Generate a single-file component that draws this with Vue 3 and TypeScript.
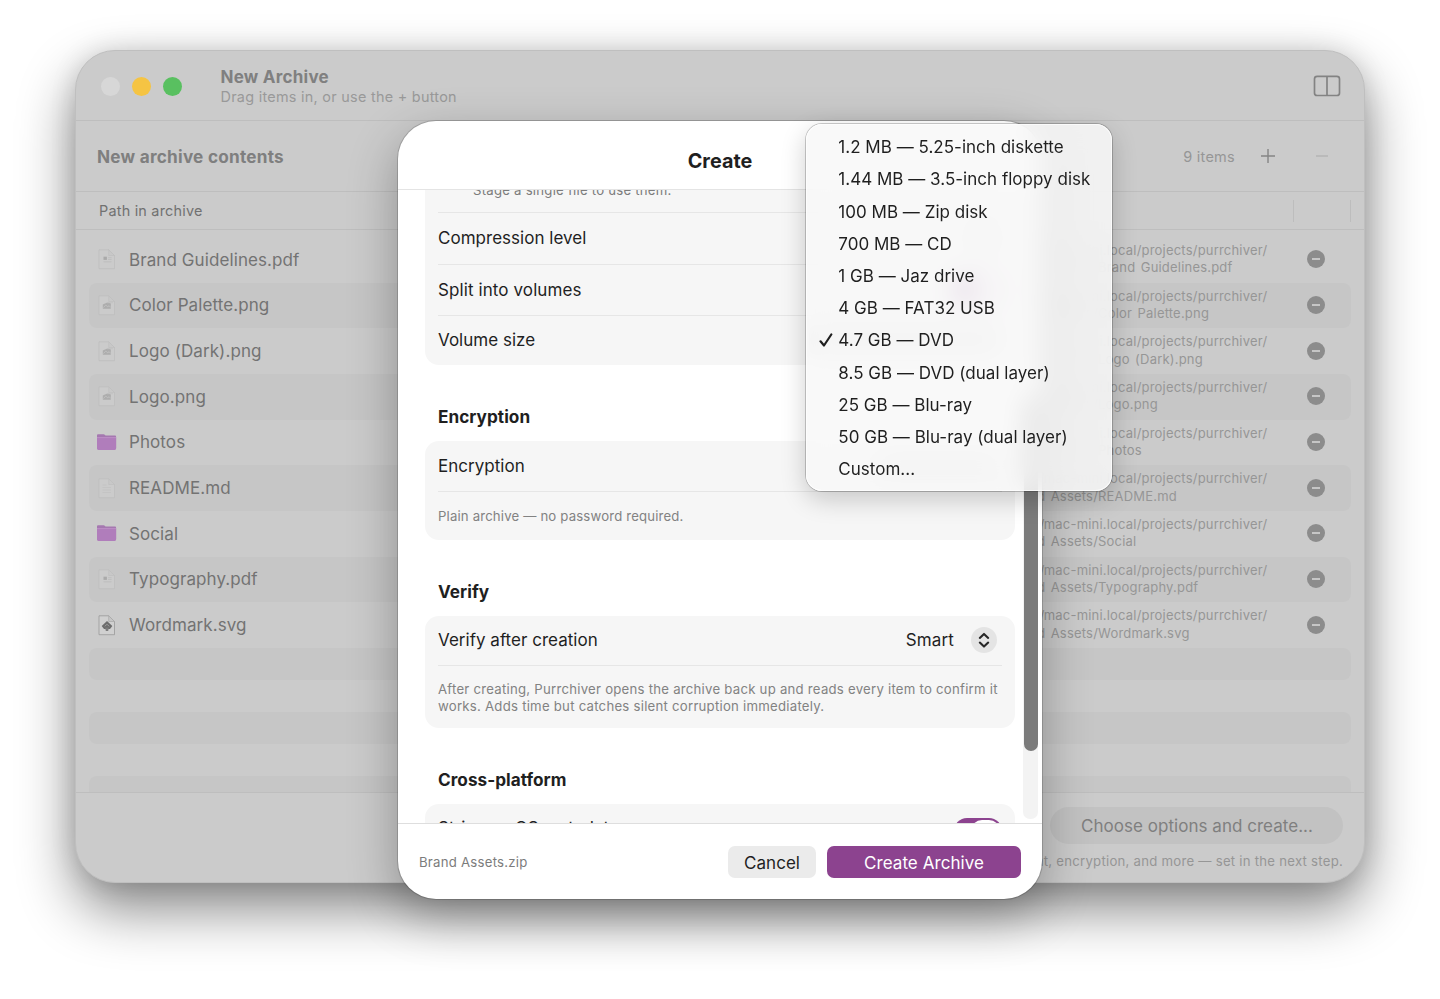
<script setup lang="ts">
type Kind = 'image' | 'pdf' | 'text' | 'folder' | 'vector'

interface Item {
  name: string
  kind: Kind
}

const items: Item[] = [
  { name: 'Brand Guidelines.pdf', kind: 'pdf' },
  { name: 'Color Palette.png', kind: 'image' },
  { name: 'Logo (Dark).png', kind: 'image' },
  { name: 'Logo.png', kind: 'image' },
  { name: 'Photos', kind: 'folder' },
  { name: 'README.md', kind: 'text' },
  { name: 'Social', kind: 'folder' },
  { name: 'Typography.pdf', kind: 'pdf' },
  { name: 'Wordmark.svg', kind: 'vector' },
]

const sizes: string[] = [
  '1.2 MB — 5.25-inch diskette',
  '1.44 MB — 3.5-inch floppy disk',
  '100 MB — Zip disk',
  '700 MB — CD',
  '1 GB — Jaz drive',
  '4 GB — FAT32 USB',
  '4.7 GB — DVD',
  '8.5 GB — DVD (dual layer)',
  '25 GB — Blu-ray',
  '50 GB — Blu-ray (dual layer)',
  'Custom...',
]
const selected = '4.7 GB — DVD'
</script>

<template>
  <main class="desktop">
    <section class="window">
      <header class="titlebar">
        <div class="lights">
          <i class="light off"></i>
          <i class="light yellow"></i>
          <i class="light green"></i>
        </div>
        <div class="titles">
          <div class="title">New Archive</div>
          <div class="subtitle">Drag items in, or use the + button</div>
        </div>
        <svg class="panes" viewBox="0 0 28 22" width="28" height="22">
          <rect x="1.5" y="1.3" width="25" height="19.2" rx="2.6" />
          <path d="M14 1.3v19.2" />
        </svg>
      </header>

      <div class="contents-bar">
        <h2>New archive contents</h2>
        <span class="count">9 items</span>
        <svg class="plus" viewBox="0 0 16 16" width="16" height="16"><path d="M8 1v14M1 8h14" /></svg>
        <svg class="minus" viewBox="0 0 16 16" width="16" height="16"><path d="M2 8h12" /></svg>
      </div>

      <div class="columns">
        <span>Path in archive</span>
        <i class="sep first"></i>
        <i class="sep"></i>
      </div>

      <div class="list">
        <div v-for="item in items" :key="item.name" class="row">
          <svg v-if="item.kind === 'folder'" class="icon" viewBox="0 0 22 22" width="22" height="22">
            <path d="M1 17V4.600c0-.8.5-1.300 1.300-1.300h5.300c.6 0 1 .2 1.400.7l.5.6h9.300c.8 0 1.300.5 1.300 1.300V17z" fill="#a578b0" />
            <path d="M1 6.600h19.100v11c0 .9-.5 1.400-1.400 1.400H2.400c-.9 0-1.400-.5-1.400-1.400z" fill="#b07dbb" />
            <path d="M1 6.600h19.100" stroke="#c193ca" stroke-width=".8" />
          </svg>
          <svg v-else class="icon" viewBox="0 0 22 22" width="22" height="22">
            <path
              d="M3 1.800h9.700L18.500 7.500v13.200H3z"
              :fill="item.kind === 'vector' ? '#d0d0d0' : '#cbcbcb'"
              :stroke="item.kind === 'vector' ? '#999' : '#bebebe'"
              stroke-width=".8"
            />
            <path d="M12.700 1.800v5.700h5.800z" :fill="item.kind === 'vector' ? '#c6c6c6' : '#c8c8c8'" :stroke="item.kind === 'vector' ? '#a8a8a8' : '#bebebe'" stroke-width=".7" />
            <g v-if="item.kind === 'vector'">
              <path d="M11 7l5.300 5.100-2.300 3h-6l-2.300-3z" fill="#6c6c6c" />
              <path d="M9.200 13.500h3.600l-.6 3.500H9.800z" fill="#7c7c7c" />
              <path d="M8.700 12.300L11 10.300l2.300 2" fill="none" stroke="#a5a5a5" stroke-width=".8" />
            </g>
            <g v-else-if="item.kind === 'image'">
              <path d="M6.800 10.500l5-2.300 3 1.300v5.300h-8z" fill="#adadad" />
              <path d="M7.300 13.500l2.500-2.300 2 1.500 1.300-1 1.600 1.700M11 8.700h6" fill="none" stroke="#c2c2c2" stroke-width=".9" />
            </g>
            <g v-else-if="item.kind === 'pdf'">
              <rect x="7.500" y="8.700" width="3.400" height="3.200" fill="#aaa" />
              <path d="M12 9.700h3.500M12 11.500h3.500M7.500 13.800h8" stroke="#bbb" stroke-width=".8" />
            </g>
            <path v-else d="M6.500 8h4M6.500 10.500h8.500M6.500 13h8.500M6.500 15.500h8.500" stroke="#c2c2c2" stroke-width=".8" />
          </svg>
          <span class="name">{{ item.name }}</span>
          <span class="path"><span class="scheme">smb://</span>mac-mini.local/projects/purrchiver/<br />Brand Assets/{{ item.name }}</span>
          <i class="remove"></i>
        </div>
        <div v-for="n in 5" :key="n" class="row blank"></div>
      </div>

      <footer class="window-footer">
        <div class="choose">Choose options and create...</div>
        <div class="hint">Format, encryption, and more — set in the next step.</div>
      </footer>
    </section>

    <section class="sheet">
      <header class="sheet-title">Create</header>
      <div class="sheet-body">
        <div class="form">
          <div class="card top">
            <div class="stage">Stage a single file to use them.</div>
            <div class="field f1"><span>Compression level</span><i class="stepper"></i></div>
            <div class="field f2"><span>Split into volumes</span><i class="switch"></i></div>
            <div class="field f3"><span>Volume size</span><i class="well"></i></div>
          </div>

          <h3>Encryption</h3>
          <div class="card encryption">
            <div class="field f4"><span>Encryption</span><i class="well short"></i></div>
            <p class="note">Plain archive — no password required.</p>
          </div>

          <h3>Verify</h3>
          <div class="card verify">
            <div class="field f5">
              <span>Verify after creation</span>
              <span class="picker">
                Smart
                <i class="stepper">
                  <svg viewBox="0 0 26 26" width="26" height="26"><path d="M8.800 10.900L13 6.900l4.200 4M8.800 15.600l4.200 4 4.200-4" /></svg>
                </i>
              </span>
            </div>
            <p class="note long">After creating, Purrchiver opens the archive back up and reads every item to confirm it<br />works. Adds time but catches silent corruption immediately.</p>
          </div>

          <h3>Cross-platform</h3>
          <div class="card cross">
            <div class="field f6"><span>Strip macOS metadata</span><i class="switch"></i></div>
          </div>
        </div>
        <div class="track"><div class="thumb"></div></div>
      </div>
      <footer class="sheet-footer">
        <span class="file">Brand Assets.zip</span>
        <button class="cancel">Cancel</button>
        <button class="create">Create Archive</button>
      </footer>
    </section>

    <ul class="menu">
      <li v-for="size in sizes" :key="size">
        <svg v-if="size === selected" class="check" viewBox="0 0 14 14" width="14" height="14"><path d="M1.500 8.300l3.500 4.200L12.300 1.500" /></svg>
        <span>{{ size }}</span>
      </li>
    </ul>
  </main>
</template>

<style>
body {
  margin: 0;
  background: #fff;
}
</style>

<style scoped>
* {
  box-sizing: border-box;
}
.desktop {
  position: relative;
  width: 1440px;
  height: 999px;
  padding: 50px 75px;
  overflow: hidden;
  background: #fff;
  font-family: Inter, "Liberation Sans", sans-serif;
  font-size: 17px;
  letter-spacing: 0.02px;
  color: #1f1f1f;
  white-space: nowrap;
}
.window {
  display: flex;
  flex-direction: column;
  width: 1290px;
  height: 833px;
  border: 1px solid #bfbfbf;
  border-radius: 40px;
  background: #cbcbcb;
  overflow: hidden;
  box-shadow: 0 26px 56px rgba(0, 0, 0, 0.48), 0 0 26px rgba(0, 0, 0, 0.12);
}
.titlebar {
  display: flex;
  align-items: center;
  height: 70px;
  padding: 1px 23px 0 24.500px;
  border-bottom: 1px solid #bebebe;
}
.lights {
  display: flex;
  gap: 12px;
}
.light {
  width: 19px;
  height: 19px;
  border-radius: 50%;
}
.off { background: #d7d7d7; }
.yellow { background: #f5c443; }
.green { background: #59c060; }
.titles {
  flex: 1;
  margin-left: 39px;
  margin-top: 1px;
}
.title {
  font-size: 17px;
  line-height: 20px;
  font-weight: 680;
  letter-spacing: 0.25px;
  color: #808080;
}
.subtitle {
  font-size: 14.400px;
  line-height: 20px;
  letter-spacing: 0.28px;
  color: #999;
}
.panes {
  fill: none;
  stroke: #838383;
  stroke-width: 1.700;
}
.contents-bar {
  display: flex;
  align-items: center;
  height: 71px;
  padding: 0 34px 0 21px;
  border-bottom: 1px solid #bebebe;
}
.contents-bar h2 {
  flex: 1;
  margin: 0;
  font-size: 17.200px;
  font-weight: 680;
  letter-spacing: 0.23px;
  color: #7f7f7f;
}
.count {
  font-size: 14.500px;
  letter-spacing: 0.26px;
  color: #969696;
}
.plus, .minus {
  fill: none;
  stroke: #858585;
  stroke-width: 1.400;
}
.plus { margin-left: 25px; }
.minus {
  margin-left: 38px;
  stroke: #b5b5b5;
}
.columns {
  display: flex;
  align-items: center;
  height: 38px;
  padding: 0 13px 0 23px;
  border-bottom: 1px solid #bebebe;
  font-size: 14.400px;
  letter-spacing: 0.22px;
  color: #717171;
}
.sep {
  width: 1px;
  height: 22px;
  background: #bdbdbd;
}
.sep.first {
  margin-left: auto;
  margin-right: 56px;
}
.list {
  flex: 1;
  min-height: 0;
  padding: 7px 13px 0;
  overflow: hidden;
}
.row {
  display: flex;
  align-items: center;
  height: 45.660px;
  padding: 0 26px 1px 7px;
  border-radius: 8px;
}
.row:nth-child(even) { background: #c6c6c6; }
.row.blank { height: 32px; }
.icon { flex: none; }
.name {
  width: 879px;
  margin-left: 11px;
  padding-top: 1px;
  letter-spacing: 0.09px;
  color: #737373;
}
.path {
  flex: 1;
  font-size: 13px;
  line-height: 17.400px;
  letter-spacing: 0.2px;
  word-spacing: 1.500px;
  color: #969696;
}
.scheme { letter-spacing: -0.600px; }
.remove {
  position: relative;
  width: 18px;
  height: 18px;
  border-radius: 50%;
  background: #8c8c8c;
}
.remove::after {
  content: "";
  position: absolute;
  left: 5px;
  top: 8px;
  width: 8px;
  height: 2px;
  background: #c6c6c6;
}
.window-footer {
  display: flex;
  flex-direction: column;
  align-items: flex-end;
  height: 90px;
  padding: 14px 21px 0;
  border-top: 1px solid #bebebe;
}
.choose {
  display: flex;
  align-items: center;
  justify-content: center;
  width: 293px;
  height: 37px;
  padding: 1px 0 0 1px;
  border-radius: 19px;
  background: #c2c2c2;
  letter-spacing: 0.03px;
  color: #7f7f7f;
}
.hint {
  margin-top: 8px;
  font-size: 13.200px;
  line-height: 18px;
  letter-spacing: 0.24px;
  color: #969696;
}

.sheet {
  position: absolute;
  left: 398px;
  top: 121px;
  display: flex;
  flex-direction: column;
  width: 644px;
  height: 778px;
  border-radius: 38px;
  background: #fff;
  overflow: hidden;
  box-shadow: 0 0 0 1px rgba(0, 0, 0, 0.16), 0 18px 50px rgba(0, 0, 0, 0.31);
}
.sheet-title {
  flex: none;
  height: 69px;
  padding-top: 27px;
  border-bottom: 1.500px solid #e4e4e4;
  font-size: 19.800px;
  line-height: 26px;
  font-weight: 670;
  text-align: center;
}
.sheet-body {
  display: flex;
  flex: 1;
  min-height: 0;
  overflow: hidden;
}
.form {
  width: 590px;
  margin-left: 27px;
}
.card {
  padding: 0 13px;
  border-radius: 14px;
  background: #f6f6f6;
}
.card.top {
  height: 175px;
  border-radius: 0 0 14px 14px;
}
.stage {
  height: 23px;
  padding-left: 35px;
  border-bottom: 1px solid #e6e6e6;
  font-size: 13.200px;
  line-height: 1px;
  letter-spacing: 0.23px;
  color: #7c7c7c;
}
.field {
  display: flex;
  align-items: center;
  justify-content: space-between;
  border-bottom: 1px solid #e6e6e6;
}
.f1 { height: 52px; padding-bottom: 1px; }
.f2 { height: 51px; letter-spacing: 0.1px; }
.f3 { height: 49px; padding-bottom: 1px; border: 0; }
.f4 { height: 51px; padding-bottom: 1px; }
.f5 { height: 50px; padding-bottom: 1px; }
.f6 { height: 48px; border: 0; }
.f6 .switch { margin-top: 6px; }
.well {
  width: 190px;
  height: 30px;
  margin-right: 3px;
  border-radius: 8px;
  background: #e2e2e2;
}
.well.short {
  width: 120px;
}
.picker {
  display: flex;
  align-items: center;
  gap: 17px;
  letter-spacing: 0.15px;
}
.stepper {
  width: 26px;
  height: 26px;
  margin-right: 5px;
  border-radius: 50%;
  background: #e4e4e4;
}
.stepper svg {
  display: block;
  fill: none;
  stroke: #262626;
  stroke-width: 2.100;
  stroke-linecap: round;
  stroke-linejoin: round;
}
.switch {
  position: relative;
  width: 48px;
  height: 26px;
  border-radius: 13px;
  background: #8c438f;
}
.switch::after {
  content: "";
  position: absolute;
  top: 2px;
  right: 2px;
  width: 29px;
  height: 22px;
  border-radius: 11px;
  background: #fff;
}
h3 {
  margin: 0;
  padding: 38px 13px 11px;
  height: 76px;
  font-size: 17.200px;
  line-height: 27px;
  font-weight: 650;
}
.encryption { height: 99px; }
.verify { height: 112px; }
.note {
  margin: 0;
  padding-top: 16px;
  font-size: 13.200px;
  line-height: 17.500px;
  letter-spacing: 0.16px;
  color: #828282;
}
.note.long {
  padding-top: 14.500px;
  letter-spacing: 0.24px;
}
.track {
  width: 15px;
  height: 629px;
  margin-left: 8px;
  padding: 208px 0 0 1px;
  border-radius: 0 0 7px 7px;
  background: #f3f3f3;
}
.thumb {
  width: 14px;
  height: 353px;
  border-radius: 7px;
  background: #7b7b7b;
}
.sheet-footer {
  display: flex;
  flex: none;
  align-items: center;
  height: 76px;
  padding: 0 21px;
  border-top: 1px solid #dedede;
}
.file {
  flex: 1;
  font-size: 13.200px;
  letter-spacing: 0.24px;
  color: #7c7c7c;
}
button {
  height: 32px;
  padding: 2px 0 0;
  border: 0;
  border-radius: 7px;
  font: inherit;
  letter-spacing: 0.06px;
}
.cancel {
  width: 88px;
  margin-right: 11px;
  background: #ebebeb;
  color: #1f1f1f;
}
.create {
  width: 194px;
  background: #8c438f;
  color: #fff;
}

.menu {
  position: absolute;
  left: 806px;
  top: 124px;
  width: 306px;
  height: 367px;
  margin: 0;
  padding: 7px 0 0;
  border-radius: 16px;
  list-style: none;
  background: rgba(248, 248, 248, 0.84);
  backdrop-filter: blur(12px);
  box-shadow: 0 0 0 1px rgba(0, 0, 0, 0.2), inset 0 0 0 1px rgba(255, 255, 255, 0.75), 0 8px 26px rgba(0, 0, 0, 0.2);
}
.menu li {
  position: relative;
  display: flex;
  align-items: center;
  height: 32.220px;
  padding-left: 32.300px;
}
.check {
  position: absolute;
  left: 13px;
  top: 9px;
  fill: none;
  stroke: #1f1f1f;
  stroke-width: 2.200;
  stroke-linecap: round;
  stroke-linejoin: round;
}
</style>
